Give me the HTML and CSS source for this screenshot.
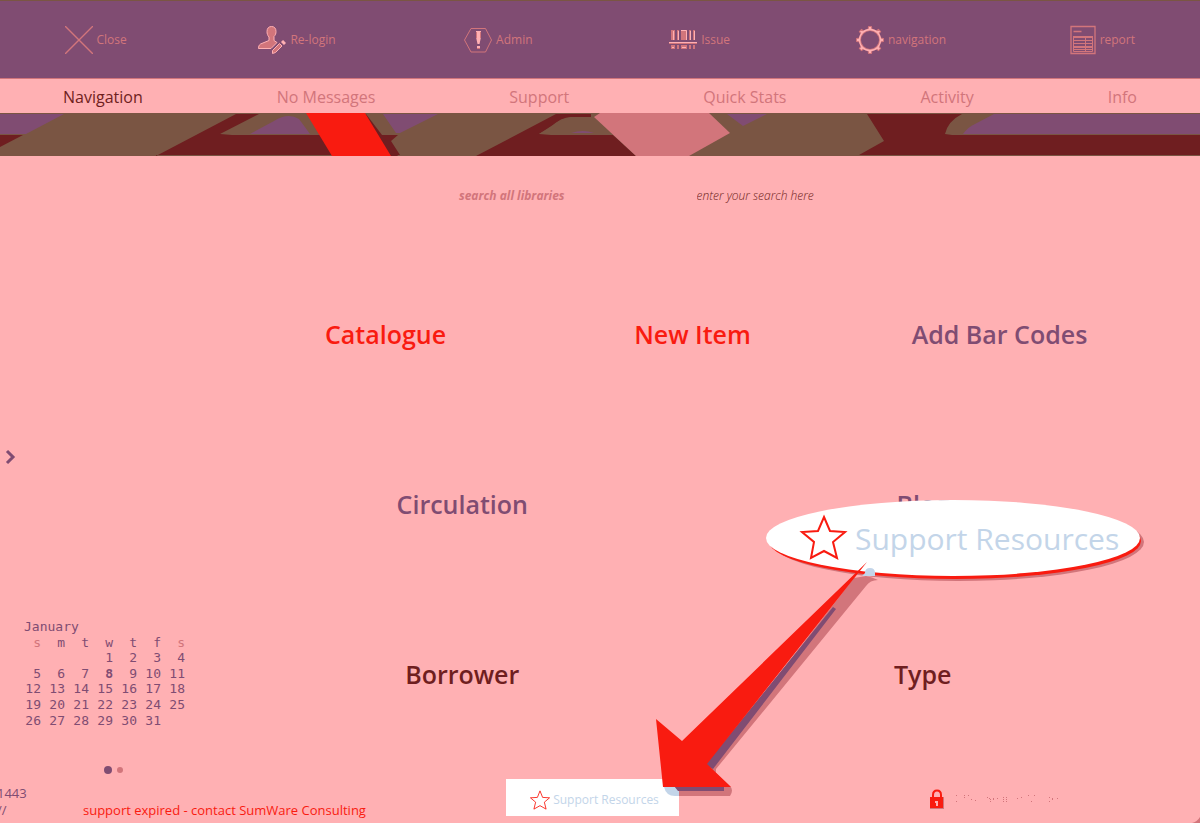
FILE: index.html
```html
<!DOCTYPE html>
<html lang="en">
<head>
<meta charset="utf-8">
<title>Library navigation</title>
<link rel="stylesheet" href="styles.css">
</head>
<body>
<div class="app">
  <header class="toolbar">
    <div class="tools">
      <button class="tool" type="button">
        <svg class="icon" width="28" height="28" viewBox="0 0 28 28"><path d="M0 0 28 28M28 0 0 28" stroke="#d2757b" stroke-width="1.400" fill="none"/></svg>
        Close
      </button>
      <button class="tool" type="button">
        <svg class="icon" width="28" height="28" viewBox="0 0 28 28"><path d="M13.500.500c-3 0-4.500 2-4.500 5 0 2 .5 4 2 5.500v3.500L2.500 18C1 19 .5 20.500.500 22.500H13l6-6-3-2v-4c1.500-1.500 2-3 2-5 0-3-1.500-5-4.500-5z" fill="#d2757b" stroke="#ffb0b3"/><path d="M14.500 27.500v-3l7-7 2.500 2.500-6.500 6.500z" fill="#d2757b" stroke="#ffb0b3"/><path d="M24 15l3 3" stroke="#ffb0b3" stroke-width="3"/></svg>
        Re-login
      </button>
      <button class="tool" type="button">
        <svg class="icon" width="28" height="28" viewBox="0 0 28 28"><path d="M7 2.500h14.500L27.500 14l-6 12H7L.5 14z" stroke="#d2757b" fill="none"/><path d="M12 5h5v6l-1.500 7h-2L12 11zM13 20h3v3h-3z" fill="#ffb0b3"/><path d="M12.500 6v6M16.500 6v6M13 22.500h3" stroke="#d2757b"/></svg>
        Admin
      </button>
      <button class="tool" type="button">
        <svg class="icon" width="28" height="28" viewBox="0 0 28 28"><path d="M2 4h4v10H2zM8 4h2v10H8zM12 4h6v10h-6zM20 4h2v10h-2zM24 4h2v10h-2zM2 19h4v4H2zM8 19h2v4H8zM12 19h6v4h-6zM20 19h2v4h-2zM24 19h2v4h-2z" fill="#d2757b"/><path d="M4.500 5v9M9.500 5v9M12 4.500h5.500V14M21.500 5v9M25.500 5v9M0 16.500h28M13 21.500h4M3 21.500h2" stroke="#ffb0b3" fill="none"/><path d="M0 17.500h28" stroke="#d2757b"/></svg>
        Issue
      </button>
      <button class="tool" type="button">
        <svg class="icon" width="28" height="28" viewBox="0 0 28 28">
          <g fill="#ffb0b3" stroke="#d2757b">
            <path id="tooth" d="M12 4 12.500.500h3L16 4z"/>
            <use href="#tooth" transform="rotate(45 14 14)"/><use href="#tooth" transform="rotate(90 14 14)"/><use href="#tooth" transform="rotate(135 14 14)"/><use href="#tooth" transform="rotate(180 14 14)"/><use href="#tooth" transform="rotate(225 14 14)"/><use href="#tooth" transform="rotate(270 14 14)"/><use href="#tooth" transform="rotate(315 14 14)"/>
          </g>
          <circle cx="14" cy="14" r="10" fill="none" stroke="#d2757b" stroke-width="2"/>
          <circle cx="14" cy="14" r="10.500" fill="none" stroke="#ffb0b3" stroke-width="1.300"/>
        </svg>
        navigation
      </button>
      <button class="tool" type="button">
        <svg class="icon" width="26" height="30" viewBox="0 0 26 30"><path d="M1 1.500h24v27H1zM3.500 6.500h8" fill="none" stroke="#d2757b" stroke-width="1.300"/><path d="M3 12h20M3 22h20" stroke="#d2757b" stroke-width="2"/><path d="M3.500 12v14.500h19V12M3 15.500h20M3 18.500h20M3 24.500h20M15.500 12v14" fill="none" stroke="#d2757b"/></svg>
        report
      </button>
    </div>
  </header>

  <nav class="tabs">
    <a class="tab current" href="#navigation">Navigation</a>
    <a class="tab" href="#messages">No Messages</a>
    <a class="tab" href="#support">Support</a>
    <a class="tab" href="#stats">Quick Stats</a>
    <a class="tab" href="#activity">Activity</a>
    <a class="tab" href="#info">Info</a>
  </nav>

  <svg class="banner" viewBox="0 0 1200 43" preserveAspectRatio="none">
    <path fill="#7a5543" d="M0 0h1200v43H0z"/>
    <path fill="#804c72" d="M0 1h64L26 21H0z"/>
    <path fill="#6f1e20" d="M0 22h23L0 34z"/>
    <path fill="#6f1e20" d="M156 43 236 1h23l-39 20 12 1h166l-7 6 9 14H156z"/>
    <path fill="#804c72" d="M250 21 274 8q14-9 25-2l11 15zM383 1h55L400 20h-4z"/>
    <path fill="#6f1e20" d="M364 1h2l32 42h-10z"/>
    <path fill="#f91b10" d="M306 0h59l26 43h-59z"/>
    <path fill="#6f1e20" d="M476 43 556 1h35v3h-20q-10 0-20 10l-12 7 12 1h62l23 21z"/>
    <path fill="#7a5543" d="M539 21 559 8q8-4 16-4h20l18 17z"/>
    <path fill="#804c72" d="M571 20q12-4 23 0zM727 1h40l-24 12z"/>
    <path fill="#d2757b" d="m594 4 6-4h109l21 20-41 23h-53z"/>
    <path fill="#6f1e20" d="M867 1h95q-14 7-17 20l7 1h248v20H859l25-14z"/>
    <path fill="#804c72" d="M994 1h206v20H963q5-7 12-10z"/>
  </svg>

  <main class="main">
    <aside class="side">
      <button class="expand" type="button" aria-label="Expand panel">
        <svg width="12" height="16" viewBox="0 0 12 16"><path d="m2 2 6 6-6 6" fill="none" stroke="#804c72" stroke-width="3"/></svg>
      </button>
      <table class="calendar">
        <caption>January</caption>
        <thead><tr><th class="dim">s</th><th>m</th><th>t</th><th>w</th><th>t</th><th>f</th><th class="dim">s</th></tr></thead>
        <tbody>
          <tr><td></td><td></td><td></td><td>1</td><td>2</td><td>3</td><td>4</td></tr>
          <tr><td>5</td><td>6</td><td>7</td><td class="today">8</td><td>9</td><td>10</td><td>11</td></tr>
          <tr><td>12</td><td>13</td><td>14</td><td>15</td><td>16</td><td>17</td><td>18</td></tr>
          <tr><td>19</td><td>20</td><td>21</td><td>22</td><td>23</td><td>24</td><td>25</td></tr>
          <tr><td>26</td><td>27</td><td>28</td><td>29</td><td>30</td><td>31</td><td></td></tr>
        </tbody>
      </table>
      <div class="pager"><span class="dot on"></span><span class="dot"></span></div>
    </aside>

    <section class="content">
      <form class="search">
        <label for="q">search all libraries</label>
        <input id="q" type="text" value="enter your search here">
      </form>
      <div class="tiles">
        <div class="row"><a class="tile red" href="#catalogue">Catalogue</a><a class="tile red" href="#new">New Item</a><a class="tile" href="#codes">Add Bar Codes</a></div>
        <div class="row"><a class="tile" href="#circulation">Circulation</a><a class="tile" href="#blog">Blog</a></div>
        <div class="row"><a class="tile dark" href="#borrower">Borrower</a><a class="tile dark" href="#type">Type</a></div>
      </div>
    </section>
  </main>

  <footer class="footer">
    <div class="version"><span>1443</span><span>//</span></div>
    <p class="expired">support expired - contact SumWare Consulting</p>
    <button class="resources" type="button">
      <svg width="20" height="20" viewBox="0 0 46 46"><path d="m23 2 6 15 16 1-12 10 4 16-14-8-14 8 4-16L1 18l16-1z" fill="none" stroke="#f91b10" stroke-width="2"/></svg>
      Support Resources
    </button>
    <div class="lock">
      <svg width="14" height="20" viewBox="0 0 14 20"><path d="M3 9V6q0-4.500 4-4.500T11 6v3" fill="none" stroke="#f91b10" stroke-width="2"/><path d="M0 8h14v12H0z" fill="#d2757b"/><path d="M0 8h13v11H0z" fill="#f91b10"/><path d="M5 12h3v5H6v-3H5z" fill="#ffb0b3"/></svg>
      <svg width="104" height="10" viewBox="0 0 104 10"><path d="M1 1.500h1M1 7.500h1M9 1.500h1M9 3.500h1M13 1.500h1M16 5.500h1M20 6.500h1M32 3.500h1M34 4.500h1M35 5.500h1M35 7.500h1M38 4.500h1M38 5.500h1M42 4.500h1M48 3.500h1M48 5.500h1M48 7.500h1M51 3.500h1M51 5.500h1M51 7.500h1M62 4.500h1M66 3.500h1M73 1.500h1M76 7.500h1M79 1.500h1M94 3.500h1M94 7.500h1M97 4.500h1M97 5.500h1M102 4.500h1" stroke="#d2757b"/></svg>
    </div>
  </footer>

  <svg class="corner" width="8" height="6" viewBox="0 0 8 6"><path d="M8 0v6H0q5-1 8-6z" fill="#d2757b"/></svg>

  <div class="callout">
    <svg width="380" height="100" viewBox="0 0 380 100">
      <ellipse cx="192" cy="42" rx="186" ry="39" fill="#d2757b"/>
      <ellipse cx="189" cy="41" rx="186" ry="38" fill="#f91b10"/>
      <ellipse cx="187" cy="38" rx="187" ry="38" fill="#fff"/>
      <path d="M99 73q0-5 5-5t5 5v3H96z" fill="#c3d5e9"/>
      <path d="m58 17 6 14 15 1-12 10 4 16-13-7-13 7 3-16-12-10 16-1z" fill="none" stroke="#f91b10" stroke-width="2"/>
    </svg>
    <span class="callout-text">Support Resources</span>
  </div>
  <svg class="arrow" width="224" height="242" viewBox="0 0 224 242">
    <path d="M212 20q6 1 12 4-8 0-12 6L62 213v4l14 13q4 4 0 10H25V230l30-22L200 22z" fill="#d2757b"/>
    <path d="M10 231h15v9h-4q-9 0-11-9z" fill="#c3d5e9"/>
    <path d="M179 51l3 2L59 213l-8-4zM20 230h50v5H24z" fill="#804c72"/>
    <path d="M213 6 28 185 2 163l7 68h68l-24-23z" fill="#f91b10"/>
  </svg>
</div>
</body>
</html>
```
FILE: styles.css
```css
* { box-sizing: border-box; }

body {
  margin: 0;
  background: #ffb0b3;
  color: #804c72;
  font-family: "Open Sans", "Noto Sans", sans-serif;
  font-size: 13px;
}

button {
  padding: 0;
  border: 0;
  background: none;
  color: inherit;
  font: inherit;
}

a { text-decoration: none; }

svg { display: block; flex: none; }

.app {
  position: relative;
  display: flex;
  flex-direction: column;
  min-height: 100vh;
  overflow: hidden;
}

.toolbar {
  overflow: hidden;
  border-top: 1px solid #7a5543;
  border-bottom: 1px solid #d2757b;
  background: #804c72;
}

.tools {
  display: grid;
  grid-template-columns: repeat(6, 1fr);
  margin: 0 -3px 0 -5px;
  height: 77px;
}

.tool {
  display: flex;
  align-items: center;
  justify-content: center;
  gap: 4px;
  color: #d2757b;
  font-size: 12px;
}

.tabs {
  display: flex;
  justify-content: space-between;
  padding: 2px 63px 0;
}

.tab {
  color: #d2757b;
  font-size: 16px;
  line-height: 32px;
}

.tab.current { color: #6f1e20; }

.banner { width: 100%; height: 43px; }

.main {
  display: grid;
  grid-template-columns: 232px 1fr;
  flex: 1;
  padding-right: 47px;
}

.side {
  display: flex;
  flex-direction: column;
  padding-top: 293px;
}

.expand { align-self: flex-start; padding-left: 5px; }

.calendar {
  width: 168px;
  height: 93px;
  margin: 154px 0 0 17px;
  border-collapse: collapse;
  table-layout: fixed;
  font-family: "DejaVu Sans Mono", monospace;
  font-size: 13px;
  line-height: 15px;
}

.calendar caption { padding-left: 7px; text-align: left; line-height: 16px; }
.calendar th, .calendar td { padding: 0; text-align: right; font-weight: 400; }
.calendar .dim { color: #d2757b; }
.calendar .today { font-weight: 700; }

.pager { display: flex; align-items: center; gap: 5px; margin: 38px 0 0 104px; }
.dot { width: 6px; height: 6px; border-radius: 50%; background: #d2757b; }
.dot.on { width: 8px; height: 8px; background: #804c72; }

.search {
  display: flex;
  align-items: center;
  gap: 132px;
  height: 78px;
  padding-left: 227px;
  color: #d2757b;
  font-size: 12px;
  font-style: italic;
}

.search label { font-weight: 700; }

.search input {
  flex: 1;
  min-width: 0;
  padding: 0;
  border: 0;
  background: none;
  color: #6f1e20;
  font: inherit;
  font-weight: 300;
}

.tiles { padding-top: 15px; }
.row { display: flex; height: 170px; }

.tile {
  display: flex;
  flex: 1;
  align-items: center;
  justify-content: center;
  color: #804c72;
  font-size: 25px;
  font-weight: 600;
}

.tile.red { color: #f91b10; }
.tile.dark { color: #6f1e20; }

.footer {
  display: grid;
  grid-template-columns: 83px 423px 173px 1fr;
  height: 44px;
}

.version { display: flex; flex-direction: column; margin-left: -3px; line-height: 17px; padding-top: 6px; }
.expired { margin: 0; padding-top: 22px; color: #f91b10; line-height: 18px; }

.resources {
  display: flex;
  align-items: center;
  justify-content: center;
  gap: 3px;
  height: 37px;
  padding-top: 4px;
  padding-left: 4px;
  background: #fff;
  color: #c3d5e9;
  font-size: 12px;
}

.lock { display: flex; align-items: center; gap: 11px; height: 40px; padding-left: 251px; }

.corner {
  position: absolute;
  right: 0;
  bottom: 0;
}

.callout {
  position: absolute;
  top: 500px;
  left: 766px;
}

.callout-text {
  position: absolute;
  top: 19px;
  left: 89px;
  color: #c3d5e9;
  font-size: 30px;
  line-height: 40px;
  white-space: nowrap;
}

.arrow {
  position: absolute;
  top: 556px;
  left: 654px;
}
```
